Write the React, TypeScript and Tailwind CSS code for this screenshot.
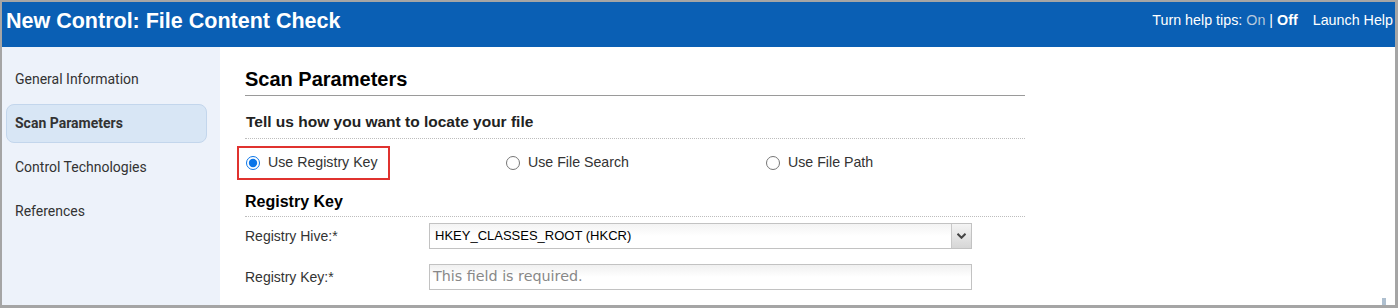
import React from "react";

const navItems = [
  "General Information",
  "Scan Parameters",
  "Control Technologies",
  "References",
];

function Radio({ label, checked }: { label: string; checked?: boolean }) {
  return (
    <label className="flex items-center gap-[8px] text-[14.2px] text-[#333]">
      <input
        type="radio"
        name="locate"
        defaultChecked={checked}
        className="m-0 h-[14px] w-[14px] accent-[#0a75e8]"
      />
      <span>{label}</span>
    </label>
  );
}

export default function App() {
  return (
    <div
      className="relative flex h-[308px] w-[1398px] flex-col overflow-hidden border-t-2 border-l-2 border-r-[3px] border-b-[3px] border-[#a5a5a5] bg-white"
      style={{ fontFamily: '"Liberation Sans", Arial, sans-serif' }}
    >
      <header className="flex h-[45px] shrink-0 items-start justify-between bg-[#0a5fb4] text-white">
        <h1 className="mt-[6px] pl-[4px] text-[21.5px] font-bold leading-[26px]">
          New Control: File Content Check
        </h1>
        <div className="mt-[9px] flex items-center pr-[2px] text-[14.3px] leading-[18px]">
          <span>Turn help tips:&nbsp;</span>
          <span className="text-[#b7c9dd]">On</span>
          <span>&nbsp;|&nbsp;</span>
          <span className="font-bold">Off</span>
          <span className="ml-[15px]">Launch Help</span>
        </div>
      </header>
      <div className="flex min-h-0 flex-1">
        <nav
          className="flex w-[218px] shrink-0 flex-col gap-[5px] bg-[#edf2fa] pt-[13px] pl-[4px]"
          style={{ fontFamily: "Roboto, sans-serif" }}
        >
          {navItems.map((item) => {
            const active = item === "Scan Parameters";
            return (
              <div
                key={item}
                className={
                  active
                    ? "flex h-[39px] w-[201px] items-center rounded-[8px] border border-[#c3d6ec] bg-[#d8e6f5] pl-[8px] text-[14px] font-bold text-[#333]"
                    : "flex h-[39px] w-[201px] items-center pl-[9px] text-[14px] text-[#333]"
                }
              >
                {item}
              </div>
            );
          })}
        </nav>
        <main className="flex-1 pl-[25px] pt-[21px]">
          <div className="w-[780px]">
            <h2 className="border-b border-[#9a9a9a] pb-[5px] text-[20px] font-bold leading-[22px] text-black">
              Scan Parameters
            </h2>
            <h3 className="mt-[16px] border-b border-dotted border-[#bdbdbd] pb-[7px] pl-[1px] text-[15.5px] font-bold leading-[19px] text-[#222]">
              Tell us how you want to locate your file
            </h3>
            <div className="mt-[7px] grid grid-cols-[261px_260px_260px] items-center">
              <div className="ml-[-8px] flex h-[34px] w-[153px] items-center border-2 border-[#e0322f] pl-[7px]">
                <Radio label="Use Registry Key" checked />
              </div>
              <Radio label="Use File Search" />
              <Radio label="Use File Path" />
            </div>
            <h3 className="mt-[12px] border-b border-dotted border-[#bdbdbd] pb-[4px] text-[16px] font-bold leading-[20px] text-black">
              Registry Key
            </h3>
            <div className="mt-[6px] flex items-center">
              <label className="w-[184px] text-[14px] text-[#333]">Registry Hive:*</label>
              <div className="flex h-[26px] w-[543px] items-stretch border border-[#c2c2c2] bg-gradient-to-b from-[#f3f3f3] via-white to-white">
                <div className="flex flex-1 items-center pl-[5px] text-[13px] text-black">
                  HKEY_CLASSES_ROOT (HKCR)
                </div>
                <div className="flex w-[20px] items-center justify-center border-l border-[#c8c8c8] bg-gradient-to-b from-[#f4f4f4] to-[#d6d6d6]">
                  <svg width="9" height="6" viewBox="0 0 9 6">
                    <path d="M0.5 0.8 L4.5 4.8 L8.5 0.8" fill="none" stroke="#444" strokeWidth="2" />
                  </svg>
                </div>
              </div>
            </div>
            <div className="mt-[15px] flex items-center">
              <label className="w-[184px] text-[14px] text-[#333]">Registry Key:*</label>
              <div
                className="flex h-[26px] w-[543px] items-center border border-[#c2c2c2] bg-gradient-to-b from-[#f0f0f0] via-white to-white pl-[3px] text-[#888]"
                style={{ fontFamily: '"DejaVu Sans", sans-serif', fontSize: "14.3px" }}
              >
                This field is required.
              </div>
            </div>
          </div>
        </main>
      </div>
      <div className="absolute right-[9px] bottom-0 h-[7px] w-[4px] bg-[#aebfcf]" />
    </div>
  );
}
